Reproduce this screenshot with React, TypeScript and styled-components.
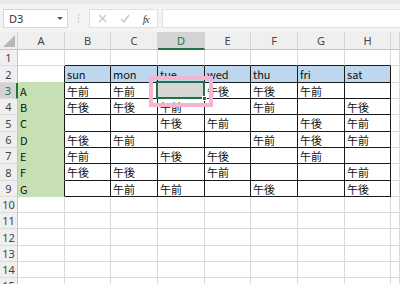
import styled, { createGlobalStyle } from "styled-components"

const GlobalStyle = createGlobalStyle`
  html, body {
    margin: 0;
    padding: 0;
    background: #ffffff;
  }
  * {
    box-sizing: border-box;
  }
`

const GRID = "#d9d9d9"
const BLACK = "#1a1a1a"
const GREEN = "#c6e0b4"
const BLUE = "#bdd7ee"
const EXCEL = "#217346"

const Window = styled.div`
  width: 400px;
  height: 284px;
  overflow: hidden;
  display: flex;
  flex-direction: column;
  background: #ffffff;
`

const FormulaBar = styled.div`
  height: 32px;
  flex: none;
  display: flex;
  align-items: flex-start;
  padding: 9px 0 0 3px;
  background: #f3f3f3;
  border-top: 4px solid #e8e8e8;
  padding-top: 5px;
`

const NameBox = styled.div`
  width: 65px;
  height: 19px;
  background: #ffffff;
  border: 1px solid #d6d6d6;
  display: flex;
  align-items: center;
  justify-content: space-between;
  padding: 0 4px 0 5px;
  font-family: "Noto Sans", "Liberation Sans", sans-serif;
  font-size: 11px;
  color: #333;
`

const Caret = styled.span`
  width: 0;
  height: 0;
  border-left: 3px solid transparent;
  border-right: 3px solid transparent;
  border-top: 3px solid #555;
`

const Grip = styled.div`
  width: 21px;
  height: 19px;
  display: flex;
  align-items: center;
  justify-content: center;
`

const FxGroup = styled.div`
  width: 69px;
  height: 19px;
  background: #ffffff;
  border: 1px solid #e0e0e0;
  display: flex;
  align-items: center;
  justify-content: space-around;
  padding: 0 2px;
`

const Fx = styled.span`
  font-family: "Liberation Serif", serif;
  font-style: italic;
  font-size: 11px;
  color: #444;
  letter-spacing: -1px;
`

const FormulaInput = styled.div`
  flex: 1;
  height: 19px;
  margin-left: 4px;
  background: #ffffff;
  border: 1px solid #e0e0e0;
  border-right: none;
`

const SheetWrap = styled.div`
  position: relative;
  flex: 1;
`

const Sheet = styled.div`
  display: grid;
  grid-template-columns: 18px 47px 46px 47px 47px 46px 47px 47px 46px 1fr;
  grid-template-rows: 18px 16px 17px 16px 16px 17px 16px 16px 17px 16px 16px 16px 17px 16px 16px 16px;
`

const Corner = styled.div`
  background: #efefef;
  border-right: 1px solid #cfcfcf;
  border-bottom: 1px solid #c4c4c4;
  position: relative;
`

const ColHead = styled.div<{ $active?: boolean }>`
  display: flex;
  align-items: center;
  justify-content: center;
  background: ${(p) => (p.$active ? "#d3d3d3" : "#efefef")};
  color: ${(p) => (p.$active ? EXCEL : "#444")};
  border-right: 1px solid #d4d4d4;
  border-bottom: ${(p) => (p.$active ? `2px solid ${EXCEL}` : "1px solid #c4c4c4")};
  font-family: "Noto Sans", "Liberation Sans", sans-serif;
  font-size: 11px;
`

const RowHead = styled.div<{ $active?: boolean }>`
  display: flex;
  align-items: center;
  justify-content: center;
  background: ${(p) => (p.$active ? "#d3d3d3" : "#efefef")};
  color: ${(p) => (p.$active ? EXCEL : "#444")};
  border-right: ${(p) => (p.$active ? `2px solid ${EXCEL}` : "1px solid #c4c4c4")};
  border-bottom: 1px solid #dcdcdc;
  font-family: "Noto Sans", "Liberation Sans", sans-serif;
  font-size: 11px;
`

const Cell = styled.div<{ $bg?: string; $right?: string; $bottom?: string }>`
  position: relative;
  display: flex;
  align-items: center;
  padding: 0 2px;
  background: ${(p) => p.$bg || "#ffffff"};
  border-right: 1px solid ${(p) => p.$right || GRID};
  border-bottom: 1px solid ${(p) => p.$bottom || GRID};
  font-family: "Noto Sans CJK JP", "Noto Sans", sans-serif;
  font-size: 11px;
  color: #111;
  white-space: nowrap;
  overflow: visible;
`

const Selection = styled.div`
  position: absolute;
  left: -2px;
  top: -2px;
  right: -1px;
  bottom: -1px;
  border: 2px solid ${EXCEL};
  z-index: 2;
`

const FillHandle = styled.div`
  position: absolute;
  right: -4px;
  bottom: -4px;
  width: 5px;
  height: 5px;
  background: ${EXCEL};
  border: 1px solid #ffffff;
`

const Annotation = styled.div`
  position: absolute;
  left: 149px;
  top: 44px;
  width: 64px;
  height: 31px;
  border: 4px solid #f5b5d1;
  z-index: 3;
`

const letters = ["A", "B", "C", "D", "E", "F", "G", "H", ""]

const days = ["sun", "mon", "tue", "wed", "thu", "fri", "sat"]

const schedule: string[][] = [
  ["A", "午前", "午前", "", "午後", "午後", "午前", ""],
  ["B", "午後", "午後", "午前", "", "午前", "", "午後"],
  ["C", "", "", "午後", "午前", "", "午後", "午前"],
  ["D", "午後", "午前", "", "", "午前", "午後", "午前"],
  ["E", "午前", "", "午後", "午後", "", "午前", ""],
  ["F", "午後", "午後", "", "午前", "", "", "午前"],
  ["G", "", "午前", "午前", "", "午後", "", "午後"],
]

const Crossmark = () => (
  <svg width="9" height="9" viewBox="0 0 9 9">
    <path d="M1 1 L8 8 M8 1 L1 8" stroke="#c4c4c4" strokeWidth="1.1" />
  </svg>
)

const Checkmark = () => (
  <svg width="10" height="9" viewBox="0 0 10 9">
    <path d="M1 5 L4 8 L9 1" stroke="#c4c4c4" strokeWidth="1.3" fill="none" />
  </svg>
)

const Dots = () => (
  <svg width="3" height="9" viewBox="0 0 3 9">
    <circle cx="1.5" cy="1" r="0.8" fill="#bbb" />
    <circle cx="1.5" cy="4.5" r="0.8" fill="#bbb" />
    <circle cx="1.5" cy="8" r="0.8" fill="#bbb" />
  </svg>
)

const CornerTriangle = () => (
  <svg width="12" height="12" viewBox="0 0 12 12" style={{ position: "absolute", right: 2, bottom: 2 }}>
    <polygon points="12,0 12,12 0,12" fill="#b8b8b8" />
  </svg>
)

const App = () => {
  const rows: JSX.Element[] = []

  // row 1
  rows.push(<RowHead key="r1">1</RowHead>)
  letters.forEach((_, c) => {
    rows.push(<Cell key={`1-${c}`} $bottom={c >= 1 && c <= 7 ? BLACK : undefined} />)
  })

  // row 2 - day headers
  rows.push(<RowHead key="r2">2</RowHead>)
  rows.push(<Cell key="2-0" $right={BLACK} $bottom={GREEN} />)
  days.forEach((d, i) => {
    rows.push(
      <Cell key={`2-${i + 1}`} $bg={BLUE} $right={BLACK} $bottom={BLACK}>
        {d}
      </Cell>
    )
  })
  rows.push(<Cell key="2-8" />)

  // rows 3-9
  schedule.forEach((line, r) => {
    const n = r + 3
    rows.push(
      <RowHead key={`r${n}`} $active={n === 3}>
        {n}
      </RowHead>
    )
    line.forEach((txt, c) => {
      if (c === 0) {
        rows.push(
          <Cell key={`${n}-0`} $bg={GREEN} $right={BLACK} $bottom={GREEN}>
            {txt}
          </Cell>
        )
        return
      }
      const selected = n === 3 && c === 3
      rows.push(
        <Cell key={`${n}-${c}`} $bg={selected ? "#d6d6d6" : undefined} $right={BLACK} $bottom={BLACK}>
          {txt}
          {selected && (
            <Selection>
              <FillHandle />
            </Selection>
          )}
        </Cell>
      )
    })
    rows.push(<Cell key={`${n}-8`} />)
  })

  // empty rows 10-15
  for (let n = 10; n <= 15; n++) {
    rows.push(<RowHead key={`r${n}`}>{n}</RowHead>)
    letters.forEach((_, c) => rows.push(<Cell key={`${n}-${c}`} />))
  }

  return (
    <Window>
      <GlobalStyle />
      <FormulaBar>
        <NameBox>
          D3
          <Caret />
        </NameBox>
        <Grip>
          <Dots />
        </Grip>
        <FxGroup>
          <Crossmark />
          <Checkmark />
          <Fx>fx</Fx>
        </FxGroup>
        <FormulaInput />
      </FormulaBar>
      <SheetWrap>
        <Sheet>
          <Corner>
            <CornerTriangle />
          </Corner>
          {letters.map((l, i) => (
            <ColHead key={`h${i}`} $active={l === "D"}>
              {l}
            </ColHead>
          ))}
          {rows}
        </Sheet>
        <Annotation />
      </SheetWrap>
    </Window>
  )
}

export default App
